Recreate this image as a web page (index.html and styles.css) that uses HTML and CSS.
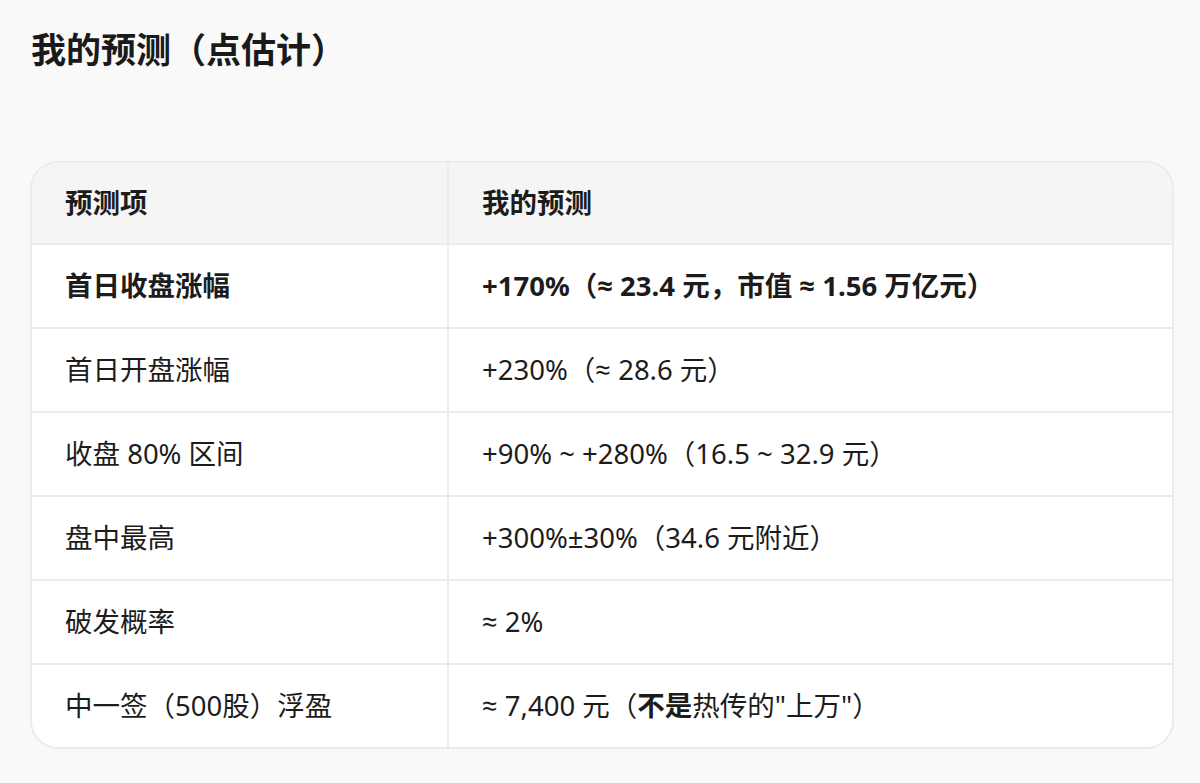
FILE: index.html
```html
<!DOCTYPE html>
<html lang="zh-CN">
<head>
<meta charset="utf-8">
<title>我的预测（点估计）</title>
<link rel="stylesheet" href="styles.css">
</head>
<body>
<main class="page">
  <h2 class="title">我的预测（点估计）</h2>
  <div class="table-wrap">
    <table class="pred">
      <thead>
        <tr><th class="c1">预测项</th><th>我的预测</th></tr>
      </thead>
      <tbody>
        <tr><td class="c1"><strong>首日收盘涨幅</strong></td><td><strong>+170%（≈ 23.4 元，市值 ≈ 1.56 万亿元）</strong></td></tr>
        <tr><td class="c1">首日开盘涨幅</td><td>+230%（≈ 28.6 元）</td></tr>
        <tr><td class="c1">收盘 80% 区间</td><td>+90% ~ +280%（16.5 ~ 32.9 元）</td></tr>
        <tr><td class="c1">盘中最高</td><td>+300%±30%（34.6 元附近）</td></tr>
        <tr><td class="c1">破发概率</td><td>≈ 2%</td></tr>
        <tr><td class="c1">中一签（500股）浮盈</td><td>≈ 7,400 元（<strong>不是</strong>热传的"上万"）</td></tr>
      </tbody>
    </table>
  </div>
</main>
</body>
</html>
```

FILE: styles.css
```css
html, body {
  margin: 0;
  padding: 0;
  background: #f9f9f9;
}
body {
  font-family: "Noto Sans", "Open Sans", "Noto Sans CJK SC", sans-serif;
  color: #1c1c1c;
}
.page {
  padding: 28px 26px 0 30px;
}
.title {
  margin: 0 0 0 1px;
  font-size: 35px;
  line-height: 44px;
  font-weight: 700;
  color: #1a1a1a;
}
.table-wrap {
  margin-top: 89px;
  width: 1140px;
  border: 2px solid #ebebeb;
  border-radius: 28px;
  overflow: hidden;
  background: #ffffff;
}
.pred {
  width: 100%;
  border-collapse: separate;
  border-spacing: 0;
  font-size: 27.5px;
  line-height: 40px;
}
.pred th,
.pred td {
  text-align: left;
  padding: 21px 33px;
  border-bottom: 2px solid #ebebeb;
  vertical-align: middle;
  white-space: nowrap;
}
.pred th {
  padding: 20px 33px;
  background: #f5f5f5;
  font-weight: 700;
}
.pred tbody tr:last-child td {
  border-bottom: none;
}
.pred .c1 {
  width: 349px;
  border-right: 2px solid #ebebeb;
}
.pred td {
  font-weight: 400;
}
.pred strong {
  font-weight: 700;
}
```
